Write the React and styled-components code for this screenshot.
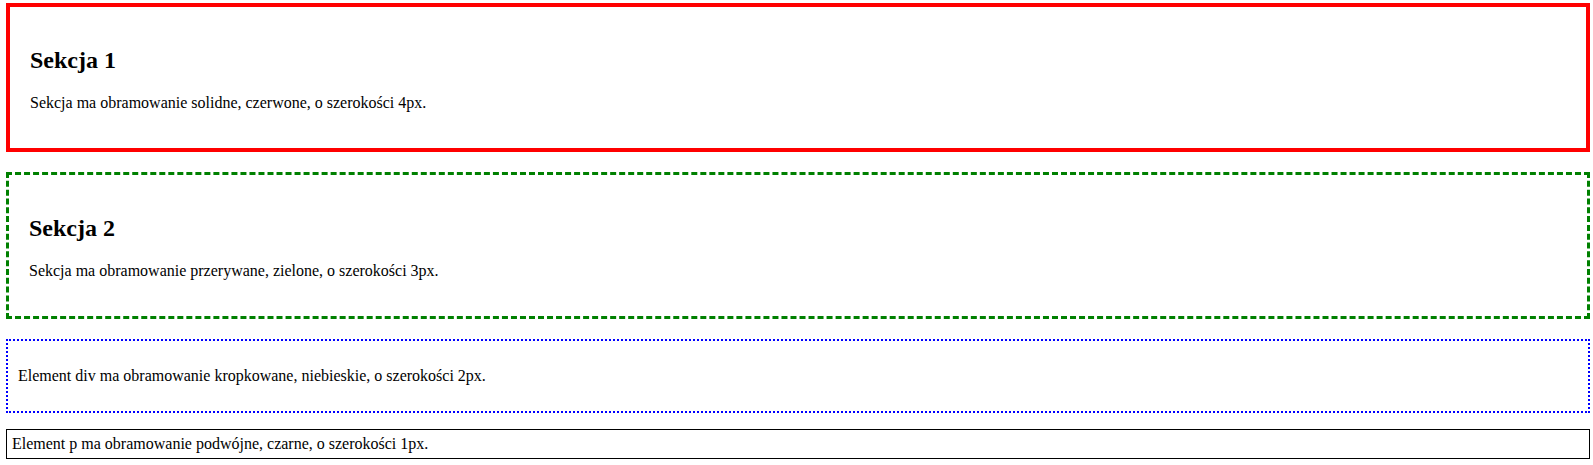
import React from 'react';
import styled, { createGlobalStyle } from 'styled-components';

const GlobalStyle = createGlobalStyle`
    body {
        margin: 0;
        background: #fff;
        color: #000;
        font-family: "Liberation Serif", "Times New Roman", serif;
        font-size: 16px;
    }
`;

const Page = styled.div`
    padding: 3px 3px 0 6px;
`;

const Section = styled.section`
    border: ${props => props.$width}px ${props => props.$style} ${props => props.$color};
    padding: 20px;
    margin-bottom: 20px;
`;

const Heading = styled.h2`
    font-size: 24px;
    font-weight: bold;
    margin: 0.83em 0;
`;

const Text = styled.p`
    margin: 16px 0;
`;

const DottedBox = styled.div`
    border: 2px dotted #0000ff;
    padding: 10px;
`;

const DoubleText = styled.p`
    border: 1px double #000;
    padding: 5px;
    margin: 16px 0;
`;

export default function App() {
    return (
        <Page>
            <GlobalStyle />
            <Section $width={4} $style="solid" $color="#ff0000">
                <Heading>Sekcja 1</Heading>
                <Text>Sekcja ma obramowanie solidne, czerwone, o szerokości 4px.</Text>
            </Section>
            <Section $width={3} $style="dashed" $color="#008000">
                <Heading>Sekcja 2</Heading>
                <Text>Sekcja ma obramowanie przerywane, zielone, o szerokości 3px.</Text>
            </Section>
            <DottedBox>
                <Text>Element div ma obramowanie kropkowane, niebieskie, o szerokości 2px.</Text>
            </DottedBox>
            <DoubleText>Element p ma obramowanie podwójne, czarne, o szerokości 1px.</DoubleText>
        </Page>
    );
}
